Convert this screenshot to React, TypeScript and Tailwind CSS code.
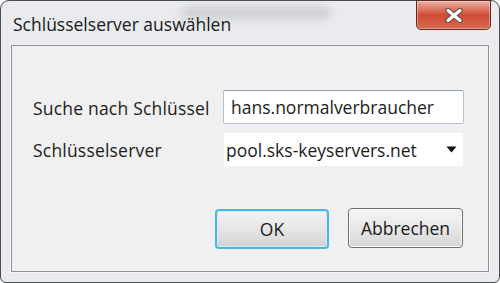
import React from "react";

export default function App() {
  const font = { fontFamily: '"Open Sans", "Noto Sans", "DejaVu Sans", sans-serif' };
  return (
    <div className="w-[500px] h-[283px] bg-white overflow-hidden" style={font}>
      <div className="relative w-[500px] h-[283px] rounded-t-[9px] rounded-b-[6px] border border-[#4a4d52] bg-[#e9ebee] flex flex-col">
        {/* title bar */}
        <div className="relative h-[44px] flex items-start justify-between shrink-0">
          <div className="absolute left-[180px] top-[6px] w-[150px] h-[12px] rounded-full bg-[#b8babd] opacity-60 blur-[5px]" />
          <span className="relative mt-[13px] ml-[12px] text-[17.5px] leading-[20px] text-[#1a1a1a]">
            Schlüsselserver auswählen
          </span>
          <div className="relative mr-[8px] -mt-px w-[75px] h-[30px] rounded-b-[5px] border border-[#5e2a22] bg-gradient-to-b from-[#eab0a3] via-[#cf4a34] to-[#d86a4f] flex items-center justify-center shadow-[inset_0_0_0_1px_rgba(255,255,255,0.35)]">
            <svg width="20" height="15" viewBox="0 0 20 15">
              <path d="M4 2.5 L16 12.5 M16 2.5 L4 12.5" stroke="#6a4a44" strokeWidth="5.5" strokeLinecap="round" />
              <path d="M4 2.5 L16 12.5 M16 2.5 L4 12.5" stroke="#ffffff" strokeWidth="3.2" strokeLinecap="round" />
            </svg>
          </div>
        </div>
        {/* client area */}
        <div className="mx-[10px] mb-[10px] flex-1 border border-[#8d9096] bg-[#f0f0f0] shadow-[0_0_0_1px_#f7f7f7] flex flex-col">
          <div className="mt-[44px] ml-[21px] grid grid-cols-[190px_241px] gap-y-[8px] items-center text-[17.5px] text-[#1c1c1c]">
            <span className="leading-[20px] mt-[2px] tracking-[0.2px]">Suche nach Schlüssel</span>
            <div className="h-[34px] bg-white border border-[#b5c2d3] border-t-[#8e9cb0] rounded-[2px] flex items-center pl-[7px]">
              <span className="leading-[20px]">hans.normalverbraucher</span>
            </div>
            <span className="leading-[20px] tracking-[0.2px]">Schlüsselserver</span>
            <div className="h-[35px] bg-white border border-[#f2f2f2] flex items-center justify-between pl-[2px] pr-[6px]">
              <span className="leading-[20px]">pool.sks-keyservers.net</span>
              <svg width="11" height="7" viewBox="0 0 11 7">
                <path d="M0.5 0.5 L10.5 0.5 L5.5 6.5 Z" fill="#111" />
              </svg>
            </div>
          </div>
          <div className="mt-[42px] mr-[25px] flex justify-end gap-[19px] text-[17.5px] text-[#1c1c1c]">
            <button className="w-[114px] h-[40px] rounded-[4px] border-2 border-[#4fb3e3] bg-gradient-to-b from-[#f3f3f3] via-[#e6e6e6] to-[#d4d4d4] shadow-[inset_0_0_0_1px_#c7ecfb] flex items-center justify-center">
              OK
            </button>
            <button className="w-[115px] h-[40px] -mt-px rounded-[4px] border border-[#707070] bg-gradient-to-b from-[#f4f4f4] via-[#e8e8e8] to-[#d6d6d6] shadow-[inset_0_0_0_1px_#fbfbfb] flex items-center justify-center">
              Abbrechen
            </button>
          </div>
        </div>
      </div>
    </div>
  );
}
